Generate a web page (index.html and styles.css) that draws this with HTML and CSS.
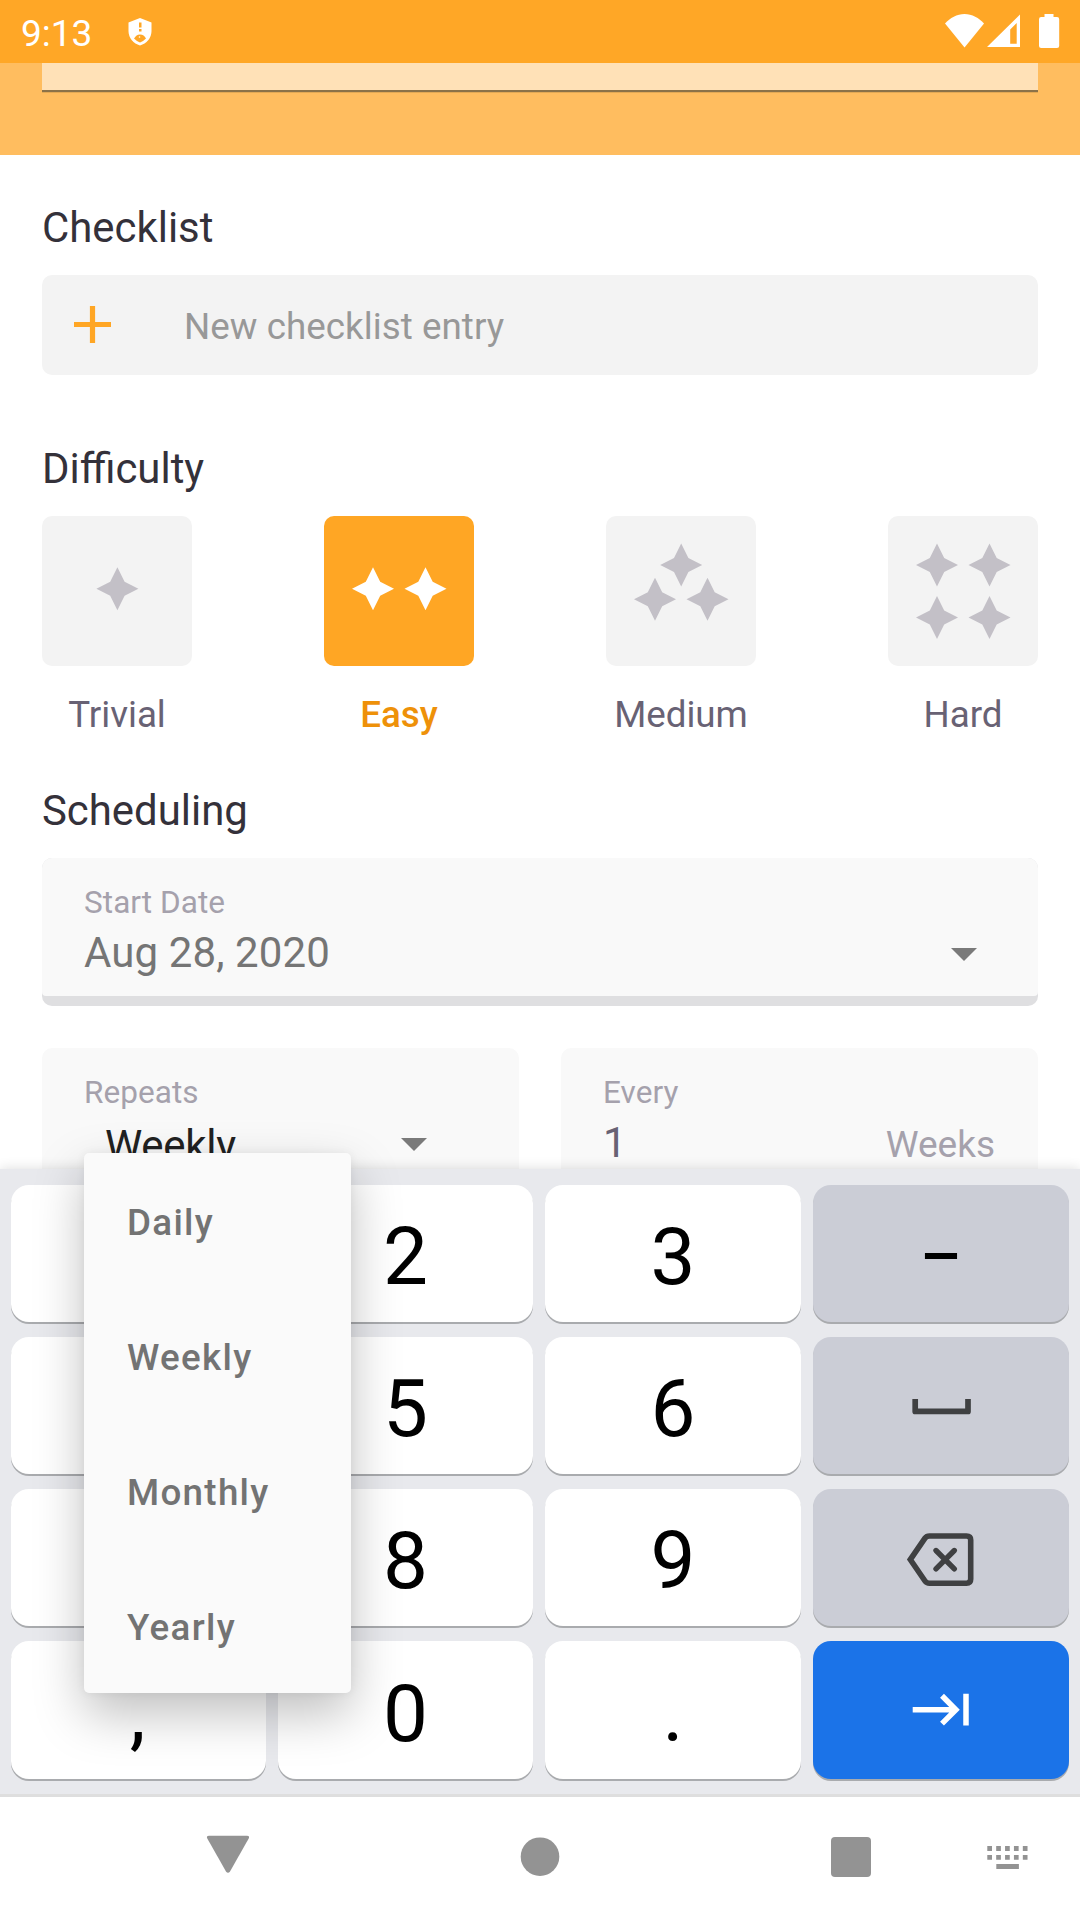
FILE: index.html
```html
<!DOCTYPE html>
<html lang="en">
<head>
<meta charset="utf-8">
<title>Edit task</title>
<link rel="stylesheet" href="styles.css">
</head>
<body>
<svg width="0" height="0" class="defs" aria-hidden="true">
  <symbol id="star" viewBox="-21 -21.5 42 43" overflow="visible"><path d="M0-21.5 7.2-7 21 0 7.2 7 0 21.5-7.2 7-21 0-7.2-7z"/></symbol>
</svg>
<div class="screen">
  <header class="status">
    <span class="time">9:13</span>
    <svg class="shield" width="24" height="28" viewBox="0 0 24 28"><path fill="#fff" d="M12 0 23.5 4.5V13c0 7-5 12.500-11.500 14.500C5.500 25.500.5 20 .5 13V4.500z"/><path fill="#ffa726" d="M11 4.500h2.500v5H11zM11 11h2.500v2.500H11zM6 20.500c2-2.500 3-4 6-4s4.500 1.500 6 4l-3 2.500-3 1.500-3-1.500z"/><circle cx="11.500" cy="19" r=".8" fill="#fff"/></svg>
    <svg class="signals" width="116" height="36" viewBox="0 0 116 36" fill="#fff"><path d="M0 9.500C5 4 12 0 19.500 0S34 4 39 9.500L19.500 33.500z"/><path fill-rule="evenodd" d="M42 33 75 .5V33zM65.200 15.500V29.700H71.700V9z"/><path d="M99.500 0h9v3h3.500q2.200 0 2.200 2.200V32q0 2-2.200 2H96.200q-2.200 0-2.200-2V5.200Q94 3 96.200 3h3.300z"/></svg>
  </header>
  <div class="hero"><div class="hero-field"></div></div>
  <main class="form">
    <h2>Checklist</h2>
    <div class="entry">
      <svg width="37" height="37" viewBox="0 0 37 37"><path d="M0 18.500H37M18.500 0V37" stroke="#ffa624" stroke-width="5.200"/></svg>
      <span>New checklist entry</span>
    </div>
    <h2 class="h-difficulty">Difficulty</h2>
    <div class="levels">
      <div class="level"><div class="tile"><svg viewBox="0 0 150 150"><use href="#star" x="54.400" y="51.200" width="42" height="43"/></svg></div><span>Trivial</span></div>
      <div class="level selected"><div class="tile"><svg viewBox="0 0 150 150"><use href="#star" x="28" y="51.200" width="42" height="43"/><use href="#star" x="80.500" y="51.200" width="42" height="43"/></svg></div><span>Easy</span></div>
      <div class="level"><div class="tile"><svg viewBox="0 0 150 150"><use href="#star" x="54.200" y="27.500" width="42" height="43"/><use href="#star" x="28" y="61.700" width="42" height="43"/><use href="#star" x="80.500" y="61.700" width="42" height="43"/></svg></div><span>Medium</span></div>
      <div class="level"><div class="tile"><svg viewBox="0 0 150 150"><use href="#star" x="28" y="27.500" width="42" height="43"/><use href="#star" x="80.500" y="27.500" width="42" height="43"/><use href="#star" x="28" y="80" width="42" height="43"/><use href="#star" x="80.500" y="80" width="42" height="43"/></svg></div><span>Hard</span></div>
    </div>
    <h2 class="h-scheduling">Scheduling</h2>
    <div class="date"><div class="box">
      <label>Start Date</label>
      <div class="line"><span class="value">Aug 28, 2020</span><svg class="caret" width="26" height="13" viewBox="0 0 26 13"><path d="M0 0H26L13 13z"/></svg></div>
    </div></div>
    <div class="pair">
      <div class="box repeats">
        <label>Repeats</label>
        <div class="line"><span class="choice">Weekly</span><svg class="caret" width="26" height="13" viewBox="0 0 26 13"><path d="M0 0H26L13 13z"/></svg></div>
      </div>
      <div class="box every">
        <label>Every</label>
        <div class="line"><span class="count">1</span><span class="unit">Weeks</span></div>
      </div>
    </div>
  </main>
  <section class="keyboard">
    <div class="key"></div><div class="key">2</div><div class="key">3</div><div class="key alt"><span class="dash">–</span></div>
    <div class="key"></div><div class="key">5</div><div class="key">6</div>
    <div class="key alt"><svg width="256" height="137" viewBox="0 0 256 137"><path d="M102.200 62v12.400h52.800V62" fill="none" stroke="#3f4042" stroke-width="5.700" stroke-linejoin="round"/></svg></div>
    <div class="key"></div><div class="key">8</div><div class="key">9</div>
    <div class="key alt"><svg width="256" height="137" viewBox="0 0 256 137" fill="none" stroke="#3f4042" stroke-width="5.600"><path d="M116.500 47H153.500Q157.700 47 157.700 51V90Q157.700 94.200 153.500 94.200H116.500Q113.500 94.200 112 92L97.300 70.600 112 49.200Q113.500 47 116.500 47z"/><path d="M123 61.500 141.300 79.800M141.300 61.500 123 79.800" stroke-linecap="round" stroke-width="5.400"/></svg></div>
    <div class="key last comma">,</div><div class="key last">0</div><div class="key last">.</div>
    <div class="key go"><svg width="256" height="137" viewBox="0 0 256 137" fill="none" stroke="#fff" stroke-width="5.500"><path d="M99.700 68.700H143M129 54.800 142.900 68.700 129 82.600M153 52.700V84.500"/></svg></div>
  </section>
  <nav class="navbar">
    <svg width="1080" height="123" viewBox="0 0 1080 123" fill="#939393"><path d="M209 38.700H247Q250 39 248.700 41.500L230 74.500Q228 77 226 74.500L207.300 41.500Q206 39 209 38.700z"/><circle cx="540" cy="59.700" r="19.300"/><rect x="831" y="40" width="40" height="40" rx="4"/><path d="M987.300 51.500H1028M987.300 60.400H1028" stroke="#939393" stroke-width="4.800" stroke-dasharray="4.700 4.180"/><path d="M996.300 67h22.600v5h-22.600z"/></svg>
  </nav>
  <div class="menu"><div>Daily</div><div>Weekly</div><div>Monthly</div><div>Yearly</div></div>
</div>
</body>
</html>
```
FILE: styles.css
```css
* { box-sizing: border-box; }
body { margin: 0; background: #fff; font-family: Roboto, sans-serif; }
.defs { position: absolute; }
.screen { position: relative; width: 1080px; height: 1920px; overflow: hidden; display: flex; flex-direction: column; }
.screen svg { display: block; flex: none; }

.status { height: 63px; flex: none; background: #ffa726; display: flex; align-items: flex-start; padding: 0 19px 0 21px; color: #fff; }
.time { font-size: 37px; line-height: 44px; margin-top: 12px; width: 107px; }
.shield { margin-top: 18px; }
.status .signals { margin: 14px 0 0 auto; }

.hero { height: 92px; flex: none; background: #ffbd5f; padding: 0 42px; }
.hero-field { height: 29px; background: #ffe1b7; border-bottom: 2px solid #8c7248; box-shadow: 0 1px 0 #e3a955; }

.form { height: 1014px; flex: none; overflow: hidden; padding: 46px 42px 0; }
h2 { margin: 0; font-size: 41.900px; line-height: 50px; font-weight: 400; color: #34313a; height: 74px; padding-top: 2px; }
.entry { height: 100px; border-radius: 10px; background: #f3f3f3; display: flex; align-items: center; gap: 73px; padding: 0 32px; font-size: 36.75px; letter-spacing: .05px; color: #989898; }
.entry svg { margin-bottom: 1px; }
.entry span { padding-top: 2px; }
.h-difficulty { margin-top: 67px; }
.levels { display: flex; justify-content: space-between; }
.level { width: 150px; display: flex; flex-direction: column; align-items: center; font-size: 36.75px; line-height: 44px; color: #686274; gap: 27px; }
.tile { width: 150px; height: 150px; border-radius: 10px; background: #f3f3f3; fill: #c3c0c7; }
.selected { color: #ee9109; font-weight: 500; }
.selected .tile { background: #ffa624; fill: #fff; }
.h-scheduling { margin-top: 47px; }
.date { height: 148px; margin-bottom: 42px; border-radius: 10px; background: #dfdfe1; padding-bottom: 10px; }
.box { background: #f9f9f9; border-radius: 10px; padding: 26px 42px 0; }
.date .box { height: 138px; border-radius: 10px 10px 4px 4px; }
label { display: block; font-size: 31.5px; line-height: 38px; letter-spacing: .06px; color: #a5a1ac; }
.line { display: flex; align-items: baseline; height: 60px; line-height: 50px; padding-top: 6px; }
.value { font-size: 42px; letter-spacing: .1px; color: #757575; }
.caret { margin: 0 19px 0 auto; fill: #7a7a7a; align-self: flex-start; position: relative; top: 20px; }
.pair { display: flex; gap: 42px; }
.pair .box { flex: 1; height: 160px; }
.choice { font-size: 42px; letter-spacing: -.3px; color: #212121; padding: 3px 0 0 21px; align-self: flex-start; }
.repeats .caret { margin-right: 50px; }
.count { font-size: 42px; color: #686274; }
.unit { font-size: 37px; color: #a5a1ac; margin: 0 1px 0 auto; }

.keyboard { height: 628px; flex: none; position: relative; background: #e8e9ed; border-bottom: 3px solid #dedede; box-shadow: 0 0 12px rgba(0,0,0,.14); padding: 16px 11px 0; display: grid; grid-template-columns: 255px 255px 256px 256px; grid-template-rows: 137px 137px 137px 138px; gap: 15px 12px; }
.key { background: #fff; border-radius: 18px; box-shadow: 0 2px 0 #a9abae; font-size: 80px; line-height: 144px; text-align: center; color: #000; overflow: hidden; }
.key svg { width: 256px; }
.last { line-height: 146px; }
.comma { padding-right: 2px; }
.dash { display: inline-block; transform: scaleX(.82); }
.alt { background: #cbcdd6; }
.go { background: #1b73e8; }
.navbar { height: 123px; flex: none; position: relative; background: #fff; }

.menu { position: absolute; left: 84px; top: 1153px; width: 267px; height: 540px; border-radius: 5px; background: #fafafa; box-shadow: 0 21px 50px rgba(0,0,0,.25), 0 0 10px rgba(0,0,0,.06); padding-left: 43px; font-size: 36.75px; font-weight: 500; letter-spacing: 1.3px; color: #737373; }
.menu div { height: 135px; line-height: 139px; }
```
